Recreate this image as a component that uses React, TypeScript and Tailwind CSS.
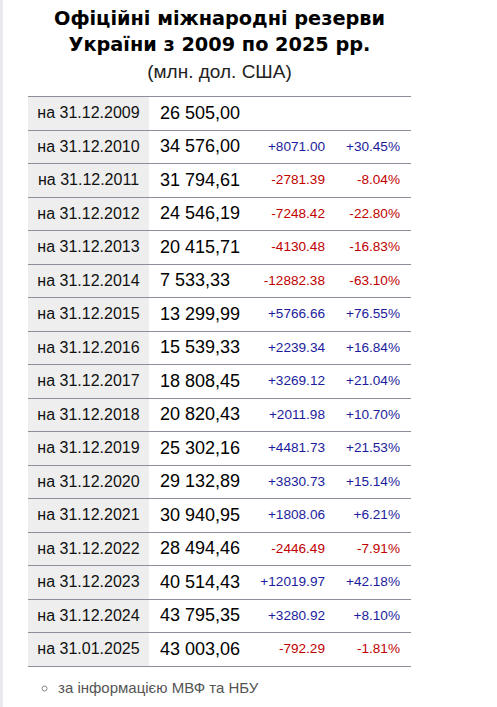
const rows: [string, string, string, string][] = [
  ["на 31.12.2009", "26 505,00", "", ""],
  ["на 31.12.2010", "34 576,00", "+8071.00", "+30.45%"],
  ["на 31.12.2011", "31 794,61", "-2781.39", "-8.04%"],
  ["на 31.12.2012", "24 546,19", "-7248.42", "-22.80%"],
  ["на 31.12.2013", "20 415,71", "-4130.48", "-16.83%"],
  ["на 31.12.2014", "7 533,33", "-12882.38", "-63.10%"],
  ["на 31.12.2015", "13 299,99", "+5766.66", "+76.55%"],
  ["на 31.12.2016", "15 539,33", "+2239.34", "+16.84%"],
  ["на 31.12.2017", "18 808,45", "+3269.12", "+21.04%"],
  ["на 31.12.2018", "20 820,43", "+2011.98", "+10.70%"],
  ["на 31.12.2019", "25 302,16", "+4481.73", "+21.53%"],
  ["на 31.12.2020", "29 132,89", "+3830.73", "+15.14%"],
  ["на 31.12.2021", "30 940,95", "+1808.06", "+6.21%"],
  ["на 31.12.2022", "28 494,46", "-2446.49", "-7.91%"],
  ["на 31.12.2023", "40 514,43", "+12019.97", "+42.18%"],
  ["на 31.12.2024", "43 795,35", "+3280.92", "+8.10%"],
  ["на 31.01.2025", "43 003,06", "-792.29", "-1.81%"],
];

export default function App() {
  return (
    <div className="flex min-h-[707px] bg-white font-['Liberation_Sans',Arial,sans-serif] text-black">
      <div className="w-[3px] shrink-0 bg-[#e8eaef]" />
      <div className="ml-[25px] w-[383px]">
        <h1 className="pt-[6px] text-center font-['DejaVu_Sans',Verdana,sans-serif] text-[19.3px] font-bold leading-[26px]">
          Офіційні міжнародні резерви
          <br />
          України з 2009 по 2025 рр.
        </h1>
        <p className="mt-[2px] text-center text-[19px] leading-[24px] text-[#222]">(млн. дол. США)</p>
        <div className="mt-[12px] border-t border-[#8f8f9b]">
          {rows.map(([date, value, diff, pct]) => {
            const color = diff.startsWith("-") ? "text-[#c00000]" : "text-[#1c1c9c]";
            return (
              <div key={date} className="flex h-[33.5px] border-b border-[#8f8f9b]">
                <div className="flex w-[121px] items-center justify-center bg-[#eeeeee] text-[16px] text-[#111]">
                  {date}
                </div>
                <div className="flex w-[101px] items-center pl-[11px] text-[18px]">{value}</div>
                <div className={`flex w-[85px] items-center justify-end pr-[10px] text-[13.6px] ${color}`}>{diff}</div>
                <div className={`flex w-[76px] items-center justify-end pr-[11px] text-[13.6px] ${color}`}>{pct}</div>
              </div>
            );
          })}
        </div>
        <ul className="mt-[10px] list-[circle] pl-[30px] text-[15px] text-[#555]">
          <li className="marker:text-[#888]">за інформацією МВФ та НБУ</li>
        </ul>
      </div>
    </div>
  );
}
